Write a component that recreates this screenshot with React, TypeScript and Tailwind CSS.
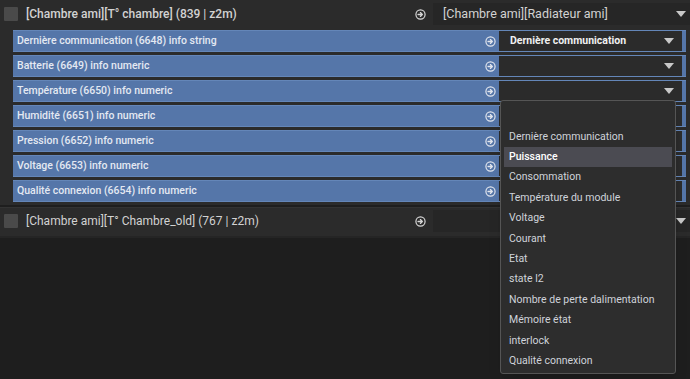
import React from 'react';

const rows = [
  { label: 'Dernière communication (6648) info string', value: 'Dernière communication' },
  { label: 'Batterie (6649) info numeric', value: '' },
  { label: 'Température (6650) info numeric', value: '' },
  { label: 'Humidité (6651) info numeric', value: '' },
  { label: 'Pression (6652) info numeric', value: '' },
  { label: 'Voltage (6653) info numeric', value: '' },
  { label: 'Qualité connexion (6654) info numeric', value: '' },
];

const options = [
  '',
  'Dernière communication',
  'Puissance',
  'Consommation',
  'Température du module',
  'Voltage',
  'Courant',
  'Etat',
  'state l2',
  'Nombre de perte dalimentation',
  'Mémoire état',
  'interlock',
  'Qualité connexion',
];

function ArrowCircle({ className = '' }: { className?: string }) {
  return (
    <svg viewBox="0 0 12 12" className={className} fill="none">
      <circle cx="6" cy="6" r="5" stroke="currentColor" strokeWidth="1.3" />
      <path d="M3.3 6h4.6M5.9 3.9L8 6 5.9 8.1" stroke="currentColor" strokeWidth="1.4" strokeLinecap="round" strokeLinejoin="round" />
    </svg>
  );
}

function Caret() {
  return (
    <svg viewBox="0 0 10 6" className="w-[10px] h-[6px]">
      <path d="M0 0h10L5 6z" fill="#c8c8c8" />
    </svg>
  );
}

function GroupHeader({ title, bold }: { title: string; bold?: boolean }) {
  return (
    <div className="flex items-center h-[26px]">
      <div className="ml-[4px] w-[14px] h-[14px] bg-[#4a4a4a] rounded-[1px]" />
      <span className={`ml-[8px] text-[12px] text-[#d2d2d2] ${bold ? 'font-medium' : 'font-normal'}`}>{title}</span>
      <div className="flex-1" />
      <ArrowCircle className="w-[11px] h-[11px] text-[#d8d8d8] mr-[7px]" />
      <div className="w-[257px] h-[22px] bg-[#262626] flex items-center pl-[10px] pr-[4px]">
        <span className="flex-1 text-[12.5px] text-[#d2d2d2]">{bold ? '[Chambre ami][Radiateur ami]' : ''}</span>
        <Caret />
      </div>
    </div>
  );
}

export default function App() {
  return (
    <div className="relative w-[690px] h-[379px] overflow-hidden bg-[#1e1e1e] font-['Roboto',sans-serif]">
      <div className="bg-[#2b2b2b] pt-[1px] pb-[3px]">
        <GroupHeader title="[Chambre ami][T° chambre] (839 | z2m)" bold />
        <div className="flex flex-col gap-[3px] pl-[13px] pr-[4px] pt-[3px]">
          {rows.map((r) => (
            <div key={r.label} className="flex items-center h-[22px] bg-[#5576a9] border-y border-[#6486b8]">
              <span className="pl-[4px] flex-1 text-[10.5px] font-medium text-[#e4e9f2]">{r.label}</span>
              <ArrowCircle className="w-[11px] h-[11px] text-[#e2e6ee] mr-[3px]" />
              <div className="w-[183px] h-[20px] bg-[#2b2b2b] flex items-center pl-[11px] pr-[8px] mr-[4px]">
                <span className="flex-1 text-[10.5px] font-bold text-[#f0f0f0]">{r.value}</span>
                <Caret />
              </div>
            </div>
          ))}
        </div>
      </div>
      <div className="mt-[2px] bg-[#2b2b2b] border-t border-[#333] pb-[2px]">
        <GroupHeader title="[Chambre ami][T° Chambre_old] (767 | z2m)" />
      </div>
      <div className="h-[2px] bg-[#252525]" />

      <div className="absolute left-[500px] top-[100px] w-[176px] h-[274px] bg-[#2d2d2d] border border-[#555] rounded-[3px] shadow-lg pt-[5px] px-[3px]">
        {options.map((o, i) => (
          <div
            key={i}
            className={`h-[20.4px] flex items-center pl-[5px] text-[10.5px] ${
              o === 'Puissance' ? 'bg-[#4b4b52] text-white font-medium' : 'text-[#cfd3da]'
            }`}
          >
            {o}
          </div>
        ))}
      </div>
    </div>
  );
}
